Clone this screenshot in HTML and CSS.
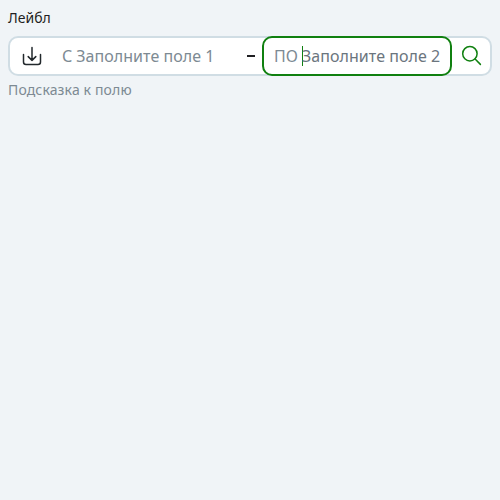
FILE: index.html
```html
<!DOCTYPE html>
<html lang="ru">
<head>
<meta charset="utf-8">
<title>Range</title>
<link rel="stylesheet" href="styles.css">
</head>
<body>
<div class="range">
  <div class="label">Лейбл</div>
  <div class="control">
    <svg class="icon icon-left" viewBox="0 0 24 24"><path d="M12 3.5v12.9M8.2 12.6l3.8 3.8 3.8-3.8M3.5 10.6v7.4c0 1.5 1 2.5 2.5 2.5h12c1.5 0 2.5-1 2.5-2.5v-7.4"/></svg>
    <div class="field first"><span>С</span><span class="placeholder-first">Заполните поле 1</span></div>
    <span class="dash"></span>
    <div class="field second"><span class="prefix">ПО</span><span class="caret"></span><span class="placeholder-second">Заполните поле 2</span></div>
    <svg class="icon icon-right" viewBox="0 0 24 24"><circle cx="9.9" cy="9.7" r="7.2"/><path d="M15.1 15l5.3 5.4"/></svg>
  </div>
  <div class="helper">Подсказка к полю</div>
</div>
</body>
</html>
```
FILE: styles.css
```css
* { box-sizing: border-box; }
body { margin: 0; padding: 8px; background: #f0f4f7; font-family: "Noto Sans", "Open Sans", sans-serif; }
.label { height: 20px; margin-bottom: 8px; font-size: 14px; line-height: 20px; color: #1f1f22; }
.control { display: flex; align-items: center; height: 40px; border: 2px solid #d0dde4; border-radius: 10px; background: #fff; }
.icon { width: 24px; height: 24px; flex: none; fill: none; stroke: #22282c; stroke-width: 1.5; stroke-linecap: round; stroke-linejoin: round; }
.icon-left { margin-left: 10px; }
.icon-right { stroke: #108010; margin-left: 8px; }
.field { display: flex; align-items: center; font-size: 16px; line-height: 24px; color: #7d8a93; white-space: nowrap; }
.first { width: 185px; margin-left: 18px; gap: 4px; }
.placeholder-first { letter-spacing: 0.05px; }
.dash { width: 8px; height: 2px; background: #1f1f22; }
.second { width: 190px; height: 40px; margin-left: 7px; padding-left: 10px; border: 2px solid #108010; border-radius: 10px; background: #fff; }
.prefix { width: 28px; }
.caret { width: 1px; height: 20px; background: #108010; flex: none; }
.placeholder-second { margin-left: -1px; letter-spacing: 0.05px; color: #6b757e; }
.helper { margin-top: 4px; height: 20px; font-size: 14px; line-height: 20px; letter-spacing: 0.14px; color: #7d8a93; }
```
